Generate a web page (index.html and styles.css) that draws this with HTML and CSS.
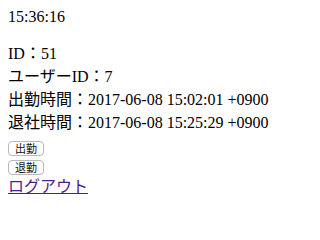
FILE: index.html
```html
<!DOCTYPE html>
<html lang="ja">
<head>
<meta charset="utf-8">
<title>勤怠</title>
<link rel="stylesheet" href="styles.css">
</head>
<body>
<div class="clock">15:36:16</div>
<div class="info">
  <div class="row">ID：51</div>
  <div class="row">ユーザーID：7</div>
  <div class="row">出勤時間：2017-06-08 15:02:01 +0900</div>
  <div class="row">退社時間：2017-06-08 15:25:29 +0900</div>
</div>
<form class="stamp first"><button class="btn" type="button">出勤</button></form>
<form class="stamp"><button class="btn" type="button">退勤</button></form>
<a class="logout" href="#">ログアウト</a>
</body>
</html>
```
FILE: styles.css
```css
body {
  margin: 8px;
  font-family: "Liberation Serif", "Noto Sans CJK JP", serif;
  font-size: 16px;
  color: #000;
  background: #fff;
}
.clock {
  line-height: 18px;
}
.info {
  margin-top: 16px;
}
.row {
  line-height: 23px;
}
.stamp {
  margin: 4px 0 0;
}
.stamp.first {
  margin-top: 7px;
}
.btn {
  display: block;
  box-sizing: border-box;
  font-family: "Noto Sans CJK JP", sans-serif;
  font-size: 11px;
  line-height: 12px;
  height: 15px;
  width: 36px;
  padding: 0 0 1px;
  margin: 0;
  background: #fff;
  color: #111;
  border: 1px solid #b8b8b8;
  border-radius: 4px;
}
.logout {
  display: inline-block;
  margin-top: 2px;
  color: #551a8b;
  text-decoration: underline;
  line-height: 20px;
}
```
